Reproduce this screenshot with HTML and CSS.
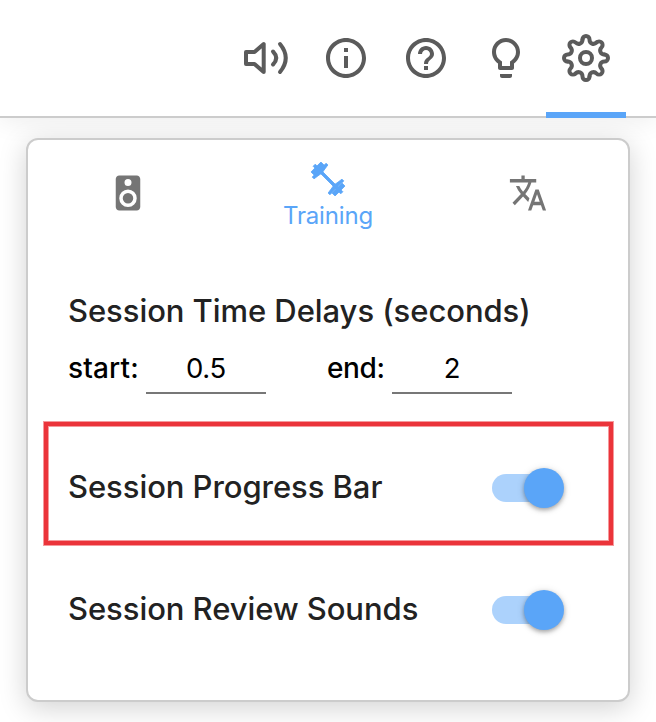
FILE: index.html
```html
<!DOCTYPE html>
<html lang="en">
<head>
<meta charset="utf-8">
<title>Settings</title>
<link rel="stylesheet" href="styles.css">
</head>
<body>
<header class="toolbar">
  <div class="tab"><svg class="icon" viewBox="0 0 48 48"><g class="line"><path d="M4 18h8.500L21.700 10v28L12.500 30H4z"/><path d="M31 17.500q6.400 6.500 0 13M38 10q11.500 14 0 28"/></g></svg></div>
  <div class="tab"><svg class="icon" viewBox="0 0 24 24"><path d="M11 7h2v2h-2zm0 4h2v6h-2zm1-9C6.480 2 2 6.480 2 12s4.480 10 10 10 10-4.480 10-10S17.520 2 12 2zm0 18c-4.410 0-8-3.590-8-8s3.590-8 8-8 8 3.590 8 8-3.590 8-8 8z"/></svg></div>
  <div class="tab"><svg class="icon" viewBox="0 0 24 24"><path d="M11 18h2v-2h-2zm1-16C6.480 2 2 6.480 2 12s4.480 10 10 10 10-4.480 10-10S17.520 2 12 2zm0 18c-4.410 0-8-3.590-8-8s3.590-8 8-8 8 3.590 8 8-3.590 8-8 8zm0-14c-2.210 0-4 1.790-4 4h2c0-1.100.9-2 2-2s2 .9 2 2c0 2-3 1.750-3 5h2c0-2.250 3-2.500 3-5 0-2.210-1.790-4-4-4z"/></svg></div>
  <div class="tab"><svg class="icon" viewBox="0 0 24 24"><path d="M9 21c0 .55.45 1 1 1h4c.55 0 1-.45 1-1v-1H9v1zm3-19C8.140 2 5 5.140 5 9c0 2.380 1.190 4.470 3 5.740V17c0 .55.45 1 1 1h6c.55 0 1-.45 1-1v-2.260c1.810-1.270 3-3.360 3-5.740 0-3.860-3.140-7-7-7zm2.850 11.100l-.85.6V16h-4v-2.300l-.85-.6A5 5 0 0 1 7 9c0-2.760 2.240-5 5-5s5 2.240 5 5c0 1.630-.8 3.160-2.150 4.100z"/></svg></div>
  <div class="tab active"><svg class="icon" viewBox="-24 -24 48 48"><defs><path id="tooth" d="M-3.500-18.500A3.500 3.500 0 0 1 3.500-18.500C3.500-14.500 7.770-12.730 10.600-15.560"/></defs><g class="line"><circle r="6"/><use href="#tooth"/><use href="#tooth" transform="rotate(45)"/><use href="#tooth" transform="rotate(90)"/><use href="#tooth" transform="rotate(135)"/><use href="#tooth" transform="rotate(180)"/><use href="#tooth" transform="rotate(225)"/><use href="#tooth" transform="rotate(270)"/><use href="#tooth" transform="rotate(315)"/></g></svg></div>
</header>
<main class="panel">
  <nav class="sections">
    <div class="section"><svg class="small" viewBox="0 0 24 24"><path fill-rule="evenodd" d="M17 2H7c-1.100 0-2 .9-2 2v16c0 1.100.9 2 2 2h10c1.100 0 2-.9 2-2V4c0-1.100-.9-2-2-2zm-5 2a2 2 0 1 1 0 4 2 2 0 0 1 0-4zm0 16a5 5 0 1 1 0-10 5 5 0 0 1 0 10zm0-8a3 3 0 1 0 0 6 3 3 0 0 0 0-6z"/></svg></div>
    <div class="section selected"><svg class="small" viewBox="-21 -21 42 42"><g class="dumbbell" transform="rotate(45)"><path d="M-14-1.400H14V1.400H-14z"/><path d="M-12.500-9.800h2.500L-9.300-5-8.500 0-9.300 5-10 9.800h-2.500zM12.500-9.800h-2.500L9.300-5 8.500 0 9.300 5 10 9.800h2.500zM-17-7h5V7h-5zM12-7h5V7h-5zM-19.500-1.500h3v3h-3zM16.500-1.500h3v3h-3z"/></g></svg><span class="section-label">Training</span></div>
    <div class="section"><svg class="small" viewBox="0 0 24 24"><path transform="translate(.72 0) scale(.94 1)" d="M12.870 15.070l-2.540-2.510.03-.03c1.740-1.940 2.980-4.170 3.710-6.530H17V4h-7V2H8v2H1v1.990h11.170C11.500 7.920 10.440 9.750 9 11.350 8.070 10.320 7.300 9.190 6.690 8h-2c.73 1.630 1.730 3.170 2.980 4.560l-5.090 5.020L4 19l5-5 3.110 3.110.76-2.040zM18.500 10h-2L12 22h2l1.120-3h4.750L21 22h2l-4.500-12zm-2.620 7l1.620-4.330L19.120 17h-3.240z"/></svg></div>
  </nav>
  <h2 class="title">Session Time Delays (seconds)</h2>
  <div class="delays">
    <label class="delay-label" for="start">start:</label><input class="delay" id="start" value="0.5">
    <label class="delay-label end" for="end">end:</label><input class="delay" id="end" value="2">
  </div>
  <div class="row highlighted"><span class="title">Session Progress Bar</span><span class="switch"></span></div>
  <div class="row"><span class="title">Session Review Sounds</span><span class="switch"></span></div>
</main>
</body>
</html>
```

FILE: styles.css
```css
* { box-sizing: border-box; }
body {
  margin: 0;
  height: 722px;
  overflow: hidden;
  background: #fff;
  font-family: Inter, "Liberation Sans", sans-serif;
}
svg { display: block; fill: currentColor; }
.toolbar {
  display: flex;
  justify-content: flex-end;
  height: 118px;
  padding-right: 30px;
  background: #fff;
  border-bottom: 2px solid #ccc;
  box-shadow: 0 4px 24px rgba(0, 0, 0, .07);
  color: #5b5b5b;
  position: relative;
  z-index: 1;
}
.tab { width: 80px; height: 118px; padding: 34px 16px 0; }
.tab.active { border-bottom: 6px solid #5aa5f8; }
.icon { width: 48px; height: 48px; overflow: visible; }
.line { fill: none; stroke: currentColor; stroke-width: 4; stroke-linecap: round; stroke-linejoin: round; }
.dumbbell { stroke: currentColor; stroke-width: .8; stroke-linejoin: round; }
.panel {
  position: relative;
  z-index: 2;
  width: 604px;
  height: 564px;
  margin: 20px 0 0 26px;
  background: #fff;
  border: 2px solid #ccc;
  border-radius: 12px;
  box-shadow: 0 6px 28px rgba(0, 0, 0, .18);
  clip-path: inset(-20px -26px -20px -26px);
}
.sections { display: flex; height: 106px; color: #757575; }
.section {
  width: 200px;
  display: flex;
  flex-direction: column;
  align-items: center;
  padding-top: 32px;
}
.section.selected { padding-top: 18px; color: #5aa5f8; }
.small { width: 42px; height: 42px; }
.section-label { font-size: 24px; line-height: 32px; letter-spacing: -.15px; }
.title {
  margin: 0;
  padding-bottom: 2px;
  font-size: 31px;
  line-height: 38px;
  font-weight: 500;
  letter-spacing: -.06px;
  color: #222;
  white-space: nowrap;
}
h2.title { padding: 46px 0 2px 40px; }
.delays { display: flex; align-items: flex-start; padding: 10px 0 0 40px; height: 90px; }
.delay-label {
  width: 78px;
  font-size: 28px;
  line-height: 53px;
  font-weight: 500;
  letter-spacing: .15px;
  color: #000;
}
.delay-label.end { width: 65px; margin-left: 61px; letter-spacing: -.4px; }
.delay {
  width: 120px;
  height: 52px;
  padding: 2px 0 0;
  border: 0;
  border-bottom: 2px solid #777;
  border-radius: 0;
  background: none;
  color: #000;
  font: 27.500px/48px Inter, "Liberation Sans", sans-serif;
  letter-spacing: -.3px;
  text-align: center;
  outline: 0;
}
.row {
  display: flex;
  align-items: center;
  justify-content: space-between;
  width: 569px;
  height: 123px;
  margin-left: 16px;
  padding: 7px 49px 0 24px;
}
.row.highlighted {
  border: 4px solid #eb343a;
  padding: 9px 45px 0 20px;
  box-shadow: 0 0 0 1px rgba(235, 52, 58, .5), inset 0 0 0 1px rgba(235, 52, 58, .5);
}
.switch {
  display: flex;
  align-items: center;
  justify-content: flex-end;
  width: 72px;
  height: 28px;
  border-radius: 14px;
  background: linear-gradient(#acd2fc, #acd2fc) 0 0 / 56px 28px no-repeat;
}
.switch::after {
  content: "";
  width: 40px;
  height: 40px;
  flex: none;
  border-radius: 50%;
  background: #5aa5f8;
  box-shadow: 0 2px 4px rgba(0, 0, 0, .3), 0 1px 8px rgba(0, 0, 0, .12);
}
```
